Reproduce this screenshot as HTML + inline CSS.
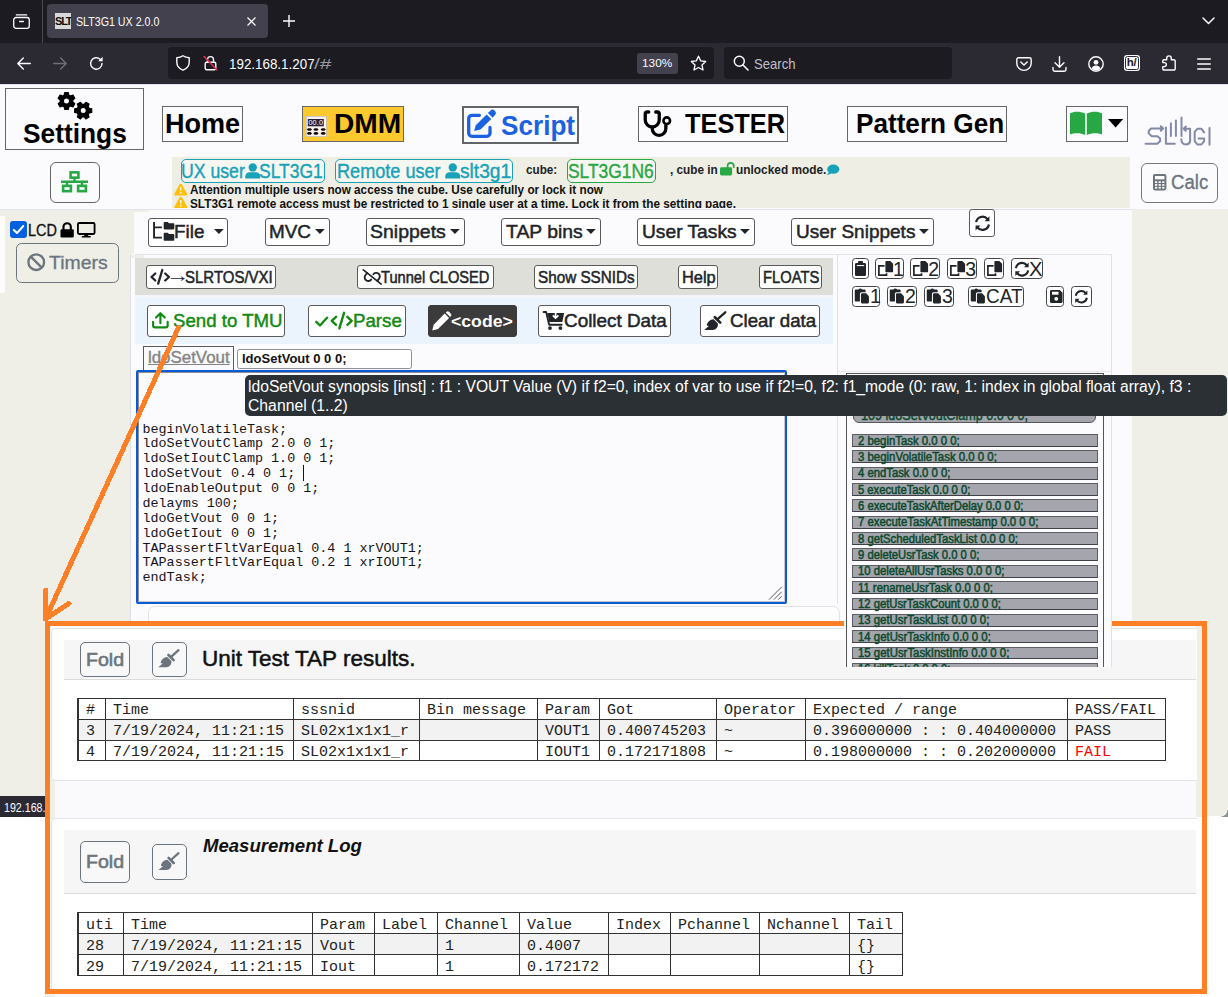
<!DOCTYPE html>
<html lang="en"><head><meta charset="utf-8"><title>SLT3G1 UX 2.0.0</title>
<style>
html,body{margin:0;padding:0;}
body{width:1228px;height:997px;position:relative;overflow:hidden;background:#ffffff;font-family:"Liberation Sans",sans-serif;color:#212529;}
body div{position:absolute;box-sizing:border-box;}
.a{position:absolute;white-space:nowrap;transform-origin:0 50%;}
.s{font-family:"Liberation Sans",sans-serif;}
.m{font-family:"Liberation Mono",monospace;}
.b{display:flex;align-items:center;justify-content:center;white-space:nowrap;background:#fff;border:1px solid #5a5a5a;border-radius:3px;color:#212529;overflow:hidden;}
.b svg{flex:none;display:block;}
svg{position:absolute;overflow:visible;}
.b svg{position:static;}
table{position:absolute;border-collapse:collapse;font-family:"Liberation Mono",monospace;font-size:15px;color:#222;table-layout:fixed;}
td{border:1px solid #333;padding:2px 0 0 7.500px;line-height:15px;vertical-align:top;white-space:nowrap;overflow:hidden;box-sizing:border-box;}
td:first-child{border-left-width:2px;padding-left:7px;}
tr.g td{background:#f2f2f2;}

</style></head>
<body>
<div style="left:0px;top:0px;width:1228px;height:43px;background:#1c1b22;"></div>
<div style="left:0px;top:43px;width:1228px;height:41px;background:#2b2a33;"></div>
<svg style="left:12.500px;top:14px" width="17" height="15" viewBox="0 0 18 16"><path d="M3.5 1h11" stroke="#fbfbfe" stroke-width="1.4" stroke-linecap="round" fill="none"/><rect x="0.7" y="3.7" width="16.6" height="11.6" rx="2.5" fill="none" stroke="#fbfbfe" stroke-width="1.4"/><path d="M7 8h4" stroke="#fbfbfe" stroke-width="1.4" stroke-linecap="round"/></svg>
<div style="left:42px;top:0px;width:1px;height:43px;background:#4a4952;"></div>
<div style="left:47px;top:3.5px;width:221px;height:34.5px;background:#42414d;border-radius:4px;"></div>
<div style="left:55px;top:13px;width:16px;height:16px;background:#d8d8d8;overflow:hidden;"><span class="a s" style="left:0px;top:1px;font-size:11px;line-height:14px;font-weight:bold;color:#111;letter-spacing:-1.2px;">SLT</span></div>
<span id="t1" class="a s" style="left:76.31px;top:15px;font-size:12.5px;line-height:14px;transform:scaleX(0.8529);color:#fbfbfe;">SLT3G1 UX 2.0.0</span>
<svg style="left:247px;top:17px" width="9" height="9" viewBox="0 0 9 9"><path d="M0.5 0.5l8 8M8.5 0.5l-8 8" stroke="#fbfbfe" stroke-width="1.2" fill="none"/></svg>
<svg style="left:283px;top:15px" width="12" height="12" viewBox="0 0 12 12"><path d="M6 0v12M0 6h12" stroke="#fbfbfe" stroke-width="1.4" fill="none"/></svg>
<svg style="left:1202px;top:17px" width="13" height="8" viewBox="0 0 13 8"><path d="M1 1l5.5 5.5L12 1" stroke="#fbfbfe" stroke-width="1.5" fill="none" stroke-linecap="round" stroke-linejoin="round"/></svg>
<svg style="left:17px;top:57px" width="14" height="13" viewBox="0 0 14 13"><path d="M13.3 6.5H1M6.3 1L0.8 6.5l5.5 5.5" stroke="#fbfbfe" stroke-width="1.4" fill="none" stroke-linecap="round" stroke-linejoin="round"/></svg>
<svg style="left:53px;top:57px" width="14" height="13" viewBox="0 0 14 13"><path d="M0.7 6.5H13M7.7 1l5.5 5.5-5.5 5.5" stroke="#6f6e78" stroke-width="1.4" fill="none" stroke-linecap="round" stroke-linejoin="round"/></svg>
<svg style="left:89px;top:56px" width="15" height="15" viewBox="0 0 15 15"><path d="M13 7.5A5.7 5.7 0 1 1 11.3 3.4" stroke="#fbfbfe" stroke-width="1.4" fill="none" stroke-linecap="round"/><path d="M13.6 0.8v4.4H9.2z" fill="#fbfbfe"/></svg>
<div style="left:168px;top:47px;width:546px;height:32px;background:#1c1b22;border-radius:4px;"></div>
<svg style="left:176px;top:55px" width="14" height="16" viewBox="0 0 14 16"><path d="M7 0.8C5 2.2 3 2.6 0.8 2.7v4.5c0 3.6 2.4 6.4 6.2 8 3.8-1.6 6.2-4.4 6.2-8V2.7C11 2.6 9 2.2 7 0.8z" stroke="#fbfbfe" stroke-width="1.4" fill="none" stroke-linejoin="round"/></svg>
<svg style="left:203px;top:55px" width="15" height="16" viewBox="0 0 15 16"><rect x="2.2" y="7.2" width="10.6" height="7.6" rx="1.5" stroke="#fbfbfe" stroke-width="1.4" fill="none"/><path d="M4.5 7V4.6a3 3 0 0 1 6 0V7" stroke="#fbfbfe" stroke-width="1.4" fill="none"/><path d="M1 1.5l13 13.5" stroke="#e22850" stroke-width="1.5" stroke-linecap="round"/></svg>
<span id="t2" class="a s" style="left:229.21px;top:56px;font-size:14.3px;line-height:16px;transform:scaleX(0.9359);color:#fbfbfe;">192.168.1.207</span>
<span id="t3" class="a s" style="left:313.71px;top:56px;font-size:14.3px;line-height:16px;transform:scaleX(1.4721);color:#9b9ba3;">/#</span>
<div style="left:637px;top:53px;width:41px;height:21px;background:#42414d;border-radius:3px;"></div>
<span id="t4" class="a s" style="left:642.37px;top:57px;font-size:11.5px;line-height:12px;transform:scaleX(1.0287);color:#fbfbfe;">130%</span>
<svg style="left:690px;top:55px" width="17" height="16" viewBox="0 0 17 16"><path d="M8.5 1.2l2.2 4.7 5 .6-3.7 3.5 1 5-4.5-2.5L4 15l1-5L1.3 6.5l5-.6z" stroke="#fbfbfe" stroke-width="1.3" fill="none" stroke-linejoin="round"/></svg>
<div style="left:724px;top:47px;width:228px;height:32px;background:#1c1b22;border-radius:4px;"></div>
<svg style="left:733px;top:55px" width="16" height="16" viewBox="0 0 16 16"><circle cx="6.3" cy="6.3" r="5" stroke="#fbfbfe" stroke-width="1.5" fill="none"/><path d="M10 10l5 5" stroke="#fbfbfe" stroke-width="1.6" stroke-linecap="round"/></svg>
<span id="t5" class="a s" style="left:754.21px;top:56px;font-size:14.3px;line-height:16px;transform:scaleX(0.9175);color:#bfbfc9;">Search</span>
<svg style="left:1016px;top:57px" width="16" height="14" viewBox="0 0 16 14"><path d="M2.5 0.8h11a1.7 1.7 0 0 1 1.7 1.7v3.7a7.2 7.2 0 0 1-14.4 0V2.5A1.7 1.7 0 0 1 2.5.8z" stroke="#fbfbfe" stroke-width="1.4" fill="none"/><path d="M4.8 5l3.2 3 3.2-3" stroke="#fbfbfe" stroke-width="1.5" fill="none" stroke-linecap="round" stroke-linejoin="round"/></svg>
<svg style="left:1052px;top:55.500px" width="15" height="16" viewBox="0 0 15 16"><path d="M7.5 0.8v10M3 6.8l4.5 4.5L12 6.8M1 11.5v2a1.7 1.7 0 0 0 1.7 1.7h9.6a1.7 1.7 0 0 0 1.7-1.7v-2" stroke="#fbfbfe" stroke-width="1.4" fill="none" stroke-linecap="round" stroke-linejoin="round"/></svg>
<svg style="left:1088px;top:55.700px" width="16" height="16" viewBox="0 0 16 16"><circle cx="8" cy="8" r="7.2" stroke="#fbfbfe" stroke-width="1.4" fill="none"/><circle cx="8" cy="6.3" r="2.4" fill="#fbfbfe"/><path d="M3.4 12.6a5 5 0 0 1 9.2 0 6.5 6.5 0 0 1-9.2 0z" fill="#fbfbfe"/></svg>
<div style="left:1124px;top:55.2px;width:15.6px;height:15.6px;background:#fbfbfe;border-radius:3px;overflow:hidden;"><div style="left:1px;top:1px;width:13.600px;height:13.600px;border:1px solid #2b2a33;border-radius:2.500px;"></div><span class="a s" style="left:2.800px;top:1px;font-size:11.500px;line-height:13px;font-weight:bold;color:#1c1b22;letter-spacing:-0.300px;">h/</span></div>
<svg style="left:1161.500px;top:55.200px" width="14" height="16" viewBox="0 0 14 16"><path d="M4.700 4.800V3.200a2.300 2.300 0 0 1 4.600 0V4.800H12a1.200 1.200 0 0 1 1.200 1.200V13.800a1.200 1.200 0 0 1-1.200 1.200H2a1.200 1.200 0 0 1-1.200-1.200V11.600H2.300a2 2 0 0 0 0-4H0.800V6A1.200 1.200 0 0 1 2 4.800z" stroke="#fbfbfe" stroke-width="1.400" fill="none" stroke-linejoin="round"/></svg>
<svg style="left:1197px;top:57.500px" width="14" height="12" viewBox="0 0 14 12"><path d="M0.7 1h12.600M0.7 6h12.600M0.7 11h12.600" stroke="#fbfbfe" stroke-width="1.4" stroke-linecap="round"/></svg>
<div style="left:0px;top:84px;width:1228px;height:732px;background:#fbfbfe;"></div>
<div style="left:0px;top:84px;width:1228px;height:1px;background:#dfe3ee;"></div>
<div style="left:5px;top:88px;width:139px;height:62px;border:1px solid #666;"></div>
<span id="t6" class="a s" style="left:22.83px;top:117px;font-size:28.5px;line-height:32px;transform:scaleX(0.9235);font-weight:bold;color:#000;">Settings</span>
<div class="b" style="left:162px;top:106px;width:81px;height:36px;font-size:27px;font-weight:bold;color:#000;border-color:#666;border-radius:0;background:transparent;"></div>
<span id="t7" class="a s" style="left:165.33px;top:107px;font-size:28.5px;line-height:32px;transform:scaleX(0.9488);font-weight:bold;color:#000;">Home</span>
<div class="b" style="left:302px;top:106px;width:102px;height:36px;font-size:27px;font-weight:bold;color:#000;border-color:#666;border-radius:0;background:transparent;background:#fdc92e;border-width:1.500px;"></div>
<span id="t8" class="a s" style="left:333.63px;top:107px;font-size:28.5px;line-height:32px;transform:scaleX(0.9861);font-weight:bold;color:#000;">DMM</span>
<div class="b" style="left:462px;top:106.1px;width:117px;height:37.7px;font-size:28px;border:2px solid #636669;border-radius:0;background:transparent;"></div>
<span id="t9" class="a s" style="left:500.96px;top:110px;font-size:28px;line-height:31px;transform:scaleX(0.9335);font-weight:bold;color:#1b62e0;">Script</span>
<div class="b" style="left:638px;top:106px;width:150px;height:36px;font-size:27px;font-weight:bold;color:#000;border-color:#666;border-radius:0;background:transparent;"></div>
<span id="t10" class="a s" style="left:685.23px;top:107px;font-size:28.5px;line-height:32px;transform:scaleX(0.8906);font-weight:bold;color:#000;">TESTER</span>
<div class="b" style="left:847px;top:106px;width:160px;height:36px;font-size:27px;font-weight:bold;color:#000;border-color:#666;border-radius:0;background:transparent;"></div>
<span id="t11" class="a s" style="left:855.93px;top:107px;font-size:28.5px;line-height:32px;transform:scaleX(0.9170);font-weight:bold;color:#000;">Pattern Gen</span>
<div class="b" style="left:1066px;top:106px;width:62px;height:36px;font-size:27px;font-weight:bold;color:#000;border-color:#666;border-radius:0;background:transparent;"></div>
<svg style="left:1138px;top:108px" width="80" height="44" viewBox="0 0 80 44"><g fill="none" stroke="#848aa6" stroke-width="2" stroke-linecap="round" stroke-linejoin="round"><path d="M22.800 18.200L25.100 20.500L22.800 22.800M25.100 20.500H13L10.700 23.100V25.400L13.700 28.300H19.500L22.100 30.600V33.200L19.200 35.800H7.500"/><path d="M27.900 19.500V35.800H36.800"/><path d="M32.900 15.300V28M37.900 12.400V28M43.500 9.400V28"/><path d="M47.800 18.500L45.600 20.700L47.800 22.900M45.600 20.700H52.100V33.200Q51.500 36.500 47.900 36.500Q43.500 36.500 43.300 31.300"/><path d="M66.100 24.400L63.500 20.800H59.300L56.700 23.800V33.200L59.300 36.500H63.500L66.100 33.200V30.600H60.600"/><path d="M71.500 19.900V36.800"/></g></svg>
<div style="left:172px;top:157px;width:958px;height:50.5px;background:#eeeee5;overflow:hidden;"></div>
<div style="left:180.5px;top:159.2px;width:144px;height:24px;border:1px solid #17a2b8;border-radius:5px;background:#f7f7f2;"></div>
<span id="t12" class="a s" style="left:180.9px;top:160px;font-size:20px;line-height:22px;transform:scaleX(0.8830);color:#17a2b8;-webkit-text-stroke:0.4px #17a2b8;">UX user</span>
<svg style="left:244.5px;top:163.3px" width="15.5" height="15.5" viewBox="0 0 16 16"><circle cx="8" cy="4.6" r="4.3" fill="#17a2b8"/><path d="M0.300 16v-2.200c0-2.600 2.100-4.200 4.600-4.200h6.200c2.500 0 4.600 1.600 4.600 4.200V16z" fill="#17a2b8"/></svg>
<span id="t13" class="a s" style="left:259.4px;top:160px;font-size:20px;line-height:22px;transform:scaleX(0.8726);color:#17a2b8;-webkit-text-stroke:0.4px #17a2b8;">SLT3G1</span>
<div style="left:335px;top:159.2px;width:178px;height:24px;border:1px solid #17a2b8;border-radius:5px;background:#f7f7f2;"></div>
<span id="t14" class="a s" style="left:336.5px;top:160px;font-size:20px;line-height:22px;transform:scaleX(0.9048);color:#17a2b8;-webkit-text-stroke:0.4px #17a2b8;">Remote user</span>
<svg style="left:444.7px;top:163.3px" width="15.5" height="15.5" viewBox="0 0 16 16"><circle cx="8" cy="4.6" r="4.3" fill="#17a2b8"/><path d="M0.300 16v-2.200c0-2.600 2.100-4.200 4.600-4.200h6.200c2.500 0 4.600 1.600 4.600 4.200V16z" fill="#17a2b8"/></svg>
<span id="t15" class="a s" style="left:459.9px;top:160px;font-size:20px;line-height:22px;transform:scaleX(0.9593);color:#17a2b8;-webkit-text-stroke:0.4px #17a2b8;">slt3g1</span>
<span id="t16" class="a s" style="left:525.78px;top:162px;font-size:13px;line-height:15px;transform:scaleX(0.9007);color:#222;font-weight:bold;">cube:</span>
<div style="left:567.3px;top:159.2px;width:88.4px;height:24px;border:1px solid #28a745;border-radius:5px;background:#f7f7f2;"></div>
<span id="t17" class="a s" style="left:568.4px;top:160px;font-size:20px;line-height:22px;transform:scaleX(0.8694);color:#28a745;-webkit-text-stroke:0.4px #28a745;">SLT3G1N6</span>
<span id="t18" class="a s" style="left:669.68px;top:162px;font-size:13px;line-height:15px;transform:scaleX(0.9070);color:#222;font-weight:bold;">, cube in</span>
<svg style="left:719.9px;top:162.2px" width="15" height="13.4" viewBox="0 0 15 13.400"><rect x="0" y="5.200" width="12.100" height="8.200" rx="1.400" fill="#28a745"/><path d="M7.600 5.600V3.900a3.100 3.100 0 0 1 6.200 0V5.200" stroke="#28a745" stroke-width="1.700" fill="none" stroke-linecap="round"/></svg>
<span id="t19" class="a s" style="left:736.28px;top:162px;font-size:13px;line-height:15px;transform:scaleX(0.9137);color:#222;font-weight:bold;">unlocked mode.</span>
<svg style="left:826.4px;top:163.5px" width="13.6" height="11.3" viewBox="0 0 14 10.500"><ellipse cx="7.500" cy="4.800" rx="6.300" ry="4.800" fill="#17a2b8"/><path d="M3 7.500c-.3 1.500-1.300 2.400-2.600 3 1.900.2 3.700-.4 5-1.500z" fill="#17a2b8"/></svg>
<svg style="left:174px;top:182.8px" width="13.5" height="12.5" viewBox="0 0 14 13"><path d="M7 0.700c.5 0 .9.250 1.150.700l5.500 9.700c.5.900-.150 1.900-1.150 1.900h-11c-1 0-1.650-1-1.150-1.900l5.500-9.700C6.100.950 6.500.700 7 .700z" fill="#ffc107"/><path d="M6.300 4.200h1.400l-.25 4.300h-.9z" fill="#fff"/><circle cx="7" cy="10.300" r=".85" fill="#fff"/></svg>
<span id="t20" class="a s" style="left:189.78px;top:182px;font-size:13px;line-height:15px;transform:scaleX(0.9016);color:#111;font-weight:bold;">Attention multiple users now access the cube. Use carefully or lock it now</span>
<div style="left:172px;top:196px;width:958px;height:11.5px;overflow:hidden;"><svg style="left:2px;top:-0.3px" width="13.5" height="12.5" viewBox="0 0 14 13"><path d="M7 0.700c.5 0 .9.250 1.150.700l5.500 9.700c.5.900-.150 1.900-1.150 1.900h-11c-1 0-1.650-1-1.150-1.900l5.500-9.700C6.100.950 6.500.700 7 .700z" fill="#ffc107"/><path d="M6.300 4.200h1.400l-.25 4.300h-.9z" fill="#fff"/><circle cx="7" cy="10.300" r=".85" fill="#fff"/></svg><span id="t21" class="a s" style="left:17.79px;top:0px;font-size:13px;line-height:15px;transform:scaleX(0.9064);color:#111;font-weight:bold;">SLT3G1 remote access must be restricted to 1 single user at a time. Lock it from the setting page.</span></div>
<div class="b" style="left:50px;top:162px;width:50px;height:41px;font-size:20px;border-radius:6px;border-color:#666;background:#fbfbfd;"></div>
<div class="b" style="left:1141px;top:163px;width:77px;height:40px;font-size:20px;border-radius:6px;border-color:#777;background:#fbfbfd;"></div>
<span id="t22" class="a s" style="left:1170.5px;top:171px;font-size:20px;line-height:22px;transform:scaleX(0.9296);color:#6c757d;-webkit-text-stroke:0.35px #6c757d;">Calc</span>
<div style="left:0px;top:209px;width:1131.6px;height:1px;background:#dfe4ec;"></div>
<div style="left:0px;top:210px;width:134px;height:606px;background:#efeee7;"></div>
<div style="left:134px;top:210px;width:15px;height:1.6px;background:#efeee7;"></div>
<div style="left:130px;top:254px;width:1px;height:562px;background:#dcdfe5;"></div>
<div style="left:131px;top:254px;width:5px;height:562px;background:#fbfbfd;"></div>
<div style="left:1131.6px;top:209px;width:97px;height:607px;background:#efeee7;"></div>
<div style="left:0px;top:216px;width:5px;height:77px;background:#fdfdfd;"></div>
<div style="left:10px;top:221px;width:17px;height:17px;background:#0060df;border-radius:3px;"></div>
<svg style="left:10px;top:221px" width="17" height="17" viewBox="0 0 16 16"><path d="M3.600 8.400l3 3 5.800-6.600" stroke="#fff" stroke-width="2" fill="none" stroke-linecap="round" stroke-linejoin="round"/></svg>
<span id="t23" class="a s" style="left:27.67px;top:221px;font-size:17px;line-height:19px;transform:scaleX(0.8487);color:#111;-webkit-text-stroke:0.3px #111;">LCD</span>
<div class="b" style="left:15.9px;top:243px;width:103.2px;height:40px;font-size:20px;border-radius:5.500px;border-color:#6c757d;background:transparent;"></div>
<span id="t24" class="a s" style="left:49.28px;top:252px;font-size:18.5px;line-height:21px;transform:scaleX(1.0500);color:#6c757d;-webkit-text-stroke:0.3px #6c757d;">Timers</span>
<div class="b" style="left:148.1px;top:218.1px;width:79.9px;height:28.7px;font-size:20px;"></div>
<span id="t25" class="a s" style="left:174.46px;top:221px;font-size:19px;line-height:21px;transform:scaleX(0.9923);color:#212529;-webkit-text-stroke:0.5px #212529;">File</span>
<svg style="left:214.1px;top:228.8px" width="9.800" height="4.900" viewBox="0 0 10 5"><path d="M0 0h10L5 5z" fill="#212529"/></svg>
<div class="b" style="left:265.4px;top:218.1px;width:64.3px;height:27.7px;font-size:20px;"></div>
<span id="t26" class="a s" style="left:269.25px;top:221px;font-size:19px;line-height:21px;transform:scaleX(0.9942);color:#212529;-webkit-text-stroke:0.5px #212529;">MVC</span>
<svg style="left:315.1px;top:228.8px" width="9.800" height="4.900" viewBox="0 0 10 5"><path d="M0 0h10L5 5z" fill="#212529"/></svg>
<div class="b" style="left:366.1px;top:218.1px;width:98.8px;height:27.7px;font-size:20px;"></div>
<span id="t27" class="a s" style="left:370.25px;top:221px;font-size:19px;line-height:21px;transform:scaleX(1.0248);color:#212529;-webkit-text-stroke:0.5px #212529;">Snippets</span>
<svg style="left:449.9px;top:228.8px" width="9.800" height="4.900" viewBox="0 0 10 5"><path d="M0 0h10L5 5z" fill="#212529"/></svg>
<div class="b" style="left:501.1px;top:218.1px;width:100px;height:27.7px;font-size:20px;"></div>
<span id="t28" class="a s" style="left:505.56px;top:221px;font-size:19px;line-height:21px;transform:scaleX(1.0179);color:#212529;-webkit-text-stroke:0.5px #212529;">TAP bins</span>
<svg style="left:586.2px;top:228.8px" width="9.800" height="4.900" viewBox="0 0 10 5"><path d="M0 0h10L5 5z" fill="#212529"/></svg>
<div class="b" style="left:637.2px;top:218.1px;width:117.7px;height:27.7px;font-size:20px;"></div>
<span id="t29" class="a s" style="left:641.96px;top:221px;font-size:19px;line-height:21px;transform:scaleX(1.0103);color:#212529;-webkit-text-stroke:0.5px #212529;">User Tasks</span>
<svg style="left:740.4px;top:228.8px" width="9.800" height="4.900" viewBox="0 0 10 5"><path d="M0 0h10L5 5z" fill="#212529"/></svg>
<div class="b" style="left:791.1px;top:218.1px;width:142.6px;height:27.7px;font-size:20px;"></div>
<span id="t30" class="a s" style="left:795.66px;top:221px;font-size:19px;line-height:21px;transform:scaleX(1.0004);color:#212529;-webkit-text-stroke:0.5px #212529;">User Snippets</span>
<svg style="left:918.7px;top:228.8px" width="9.800" height="4.900" viewBox="0 0 10 5"><path d="M0 0h10L5 5z" fill="#212529"/></svg>
<div class="b" style="left:969px;top:209px;width:26px;height:28px;font-size:20px;"></div>
<div style="left:135px;top:254px;width:977px;height:1px;background:#e4e4ea;"></div>
<div style="left:837.4px;top:254px;width:1px;height:350px;background:#e0e0e6;"></div>
<div style="left:1111px;top:254px;width:1px;height:562px;background:#e0e0e6;"></div>
<div style="left:837.4px;top:371px;width:275px;height:1px;background:#e6e6ec;"></div>
<div style="left:131px;top:254.5px;width:13px;height:3.2px;background:#eef0ee;"></div>
<div style="left:135px;top:258.2px;width:698px;height:36.4px;background:#dfdfda;"></div>
<div style="left:135px;top:294.6px;width:698px;height:3px;background:#f2f5fa;"></div>
<div class="b" style="left:146.2px;top:265.3px;width:130.3px;height:23.3px;font-size:16px;"></div>
<span id="t31" class="a s" style="left:184.73px;top:269px;font-size:15.8px;line-height:17px;transform:scaleX(0.9487);color:#212529;-webkit-text-stroke:0.5px #212529;">SLRTOS/VXI</span>
<div class="b" style="left:357.1px;top:265.3px;width:136.5px;height:23.3px;font-size:16px;"></div>
<span id="t32" class="a s" style="left:381.43px;top:269px;font-size:15.8px;line-height:17px;transform:scaleX(0.9262);color:#212529;-webkit-text-stroke:0.5px #212529;">Tunnel CLOSED</span>
<div class="b" style="left:534.3px;top:265.3px;width:103.4px;height:23.3px;font-size:16px;"></div>
<span id="t33" class="a s" style="left:537.53px;top:269px;font-size:15.8px;line-height:17px;transform:scaleX(0.9655);color:#212529;-webkit-text-stroke:0.5px #212529;">Show SSNIDs</span>
<div class="b" style="left:678.4px;top:265.3px;width:39.5px;height:23.3px;font-size:16px;"></div>
<span id="t34" class="a s" style="left:681.53px;top:269px;font-size:15.8px;line-height:17px;transform:scaleX(1.0381);color:#212529;-webkit-text-stroke:0.5px #212529;">Help</span>
<div class="b" style="left:759.2px;top:265.3px;width:62.5px;height:23.3px;font-size:16px;"></div>
<span id="t35" class="a s" style="left:762.73px;top:269px;font-size:15.8px;line-height:17px;transform:scaleX(0.9329);color:#212529;-webkit-text-stroke:0.5px #212529;">FLOATS</span>
<span id="t36" class="a s" style="left:166.26px;top:265px;font-size:19px;line-height:21px;transform:scaleX(1.2416);color:#212529;">→</span>
<div style="left:135px;top:297.5px;width:698.1px;height:46.5px;background:#ebf3fc;"></div>
<div class="b" style="left:147.3px;top:305.2px;width:138.1px;height:31.4px;font-size:20px;"></div>
<span id="t37" class="a s" style="left:172.88px;top:310px;font-size:18.5px;line-height:21px;transform:scaleX(1.0081);color:#128a12;-webkit-text-stroke:0.45px #128a12;">Send to TMU</span>
<div class="b" style="left:308.1px;top:305.2px;width:97.7px;height:31.4px;font-size:20px;"></div>
<span id="t38" class="a s" style="left:353.28px;top:310px;font-size:18.5px;line-height:21px;transform:scaleX(1.0105);color:#128a12;-webkit-text-stroke:0.45px #128a12;">Parse</span>
<div class="b" style="left:428.1px;top:305.2px;width:88.8px;height:31.4px;font-size:20px;background:#3b3b3b;border-color:#3b3b3b;"></div>
<span id="t39" class="a s" style="left:450.76px;top:312px;font-size:17px;line-height:19px;transform:scaleX(1.0373);color:#fff;font-weight:bold;">&lt;code&gt;</span>
<div class="b" style="left:538px;top:305.2px;width:132.5px;height:31.4px;font-size:20px;"></div>
<span id="t40" class="a s" style="left:564.08px;top:310px;font-size:18.5px;line-height:21px;transform:scaleX(1.0205);color:#212529;-webkit-text-stroke:0.5px #212529;">Collect Data</span>
<div class="b" style="left:700.1px;top:305.2px;width:120.4px;height:31.4px;font-size:20px;"></div>
<span id="t41" class="a s" style="left:730.48px;top:310px;font-size:18.5px;line-height:21px;transform:scaleX(1.0091);color:#212529;-webkit-text-stroke:0.5px #212529;">Clear data</span>
<div style="left:143px;top:345.5px;width:91px;height:27px;border:1.500px solid #5a5a5a;border-bottom:none;background:#fbfbfd;"></div>
<span id="t42" class="a s" style="left:148.11px;top:348px;font-size:16.2px;line-height:18px;transform:scaleX(1.0417);color:#858585;text-decoration:underline;-webkit-text-stroke:0.4px #858585;">ldoSetVout</span>
<div style="left:237.2px;top:348.5px;width:175.2px;height:20.9px;border:1px solid #8f8f9d;border-radius:2.500px;background:#fff;"></div>
<span id="t43" class="a s" style="left:241.56px;top:351px;font-size:13.5px;line-height:15px;transform:scaleX(0.9629);color:#111;font-weight:bold;">ldoSetVout 0 0 0;</span>
<div style="left:136px;top:370.4px;width:651px;height:233.8px;border:2px solid #0a5ad8;border-radius:2px;background:#fbfbfe;"></div>
<div style="left:138px;top:372.4px;width:647px;height:229.8px;border:1.500px solid #8f8f8f;border-right-color:#c8c8cc;border-bottom-color:#c8c8cc;"></div>
<span id="t44" class="a m" style="left:142.5px;top:422px;font-size:13.4px;line-height:15px;color:#15141a;">beginVolatileTask;</span>
<span id="t45" class="a m" style="left:142.5px;top:436px;font-size:13.4px;line-height:15px;color:#15141a;">ldoSetVoutClamp 2.0 0 1;</span>
<span id="t46" class="a m" style="left:142.5px;top:451px;font-size:13.4px;line-height:15px;color:#15141a;">ldoSetIoutClamp 1.0 0 1;</span>
<span id="t47" class="a m" style="left:142.5px;top:466px;font-size:13.4px;line-height:15px;color:#15141a;">ldoSetVout 0.4 0 1;</span>
<span id="t48" class="a m" style="left:142.5px;top:481px;font-size:13.4px;line-height:15px;color:#15141a;">ldoEnableOutput 0 0 1;</span>
<span id="t49" class="a m" style="left:142.5px;top:496px;font-size:13.4px;line-height:15px;color:#15141a;">delayms 100;</span>
<span id="t50" class="a m" style="left:142.5px;top:511px;font-size:13.4px;line-height:15px;color:#15141a;">ldoGetVout 0 0 1;</span>
<span id="t51" class="a m" style="left:142.5px;top:526px;font-size:13.4px;line-height:15px;color:#15141a;">ldoGetIout 0 0 1;</span>
<span id="t52" class="a m" style="left:142.5px;top:541px;font-size:13.4px;line-height:15px;color:#15141a;">TAPassertFltVarEqual 0.4 1 xrVOUT1;</span>
<span id="t53" class="a m" style="left:142.5px;top:555px;font-size:13.4px;line-height:15px;color:#15141a;">TAPassertFltVarEqual 0.2 1 xrIOUT1;</span>
<span id="t54" class="a m" style="left:142.5px;top:570px;font-size:13.4px;line-height:15px;color:#15141a;">endTask;</span>
<div style="left:303px;top:465px;width:1px;height:16px;background:#15141a;"></div>
<svg style="left:767.600px;top:585.500px" width="14.600" height="14.600" viewBox="0 0 15 15"><path d="M1 14L14 1M6 14l8-8M10.500 14l3.500-3.500" stroke="#555" stroke-width="1" fill="none"/></svg>
<div style="left:148px;top:606px;width:692px;height:30px;border:1px solid #e2e2e6;border-radius:7px;background:#fdfdfe;"></div>
<div class="b" style="left:852px;top:257.9px;width:17px;height:21.5px;font-size:18px;border-radius:3.500px;border-color:#444;"></div>
<div class="b" style="left:875.3px;top:257.9px;width:28.5px;height:21.5px;font-size:18px;border-radius:3.500px;border-color:#444;"></div>
<div class="b" style="left:910px;top:257.9px;width:30px;height:21.5px;font-size:18px;border-radius:3.500px;border-color:#444;"></div>
<div class="b" style="left:947px;top:257.9px;width:29.5px;height:21.5px;font-size:18px;border-radius:3.500px;border-color:#444;"></div>
<div class="b" style="left:984.3px;top:257.9px;width:20px;height:21.5px;font-size:18px;border-radius:3.500px;border-color:#444;"></div>
<div class="b" style="left:1011.3px;top:257.9px;width:32px;height:21.5px;font-size:18px;border-radius:3.500px;border-color:#444;"></div>
<div class="b" style="left:852px;top:286.2px;width:28px;height:20.6px;font-size:18px;border-radius:3.500px;border-color:#444;"></div>
<div class="b" style="left:887px;top:286.2px;width:29.6px;height:20.6px;font-size:18px;border-radius:3.500px;border-color:#444;"></div>
<div class="b" style="left:924px;top:286.2px;width:30px;height:20.6px;font-size:18px;border-radius:3.500px;border-color:#444;"></div>
<div class="b" style="left:968.2px;top:286.2px;width:55.5px;height:20.6px;font-size:18px;border-radius:3.500px;border-color:#444;"></div>
<div class="b" style="left:1046.2px;top:286.2px;width:18.3px;height:20.6px;font-size:18px;border-radius:3.500px;border-color:#444;"></div>
<div class="b" style="left:1071px;top:286.2px;width:20.6px;height:20.6px;font-size:18px;border-radius:3.500px;border-color:#444;"></div>
<svg style="left:0px;top:0px" width="150" height="150" viewBox="0 0 150 150"><path d="M68.78 106.98 L68.32 109.51 L64.68 109.51 L64.22 106.98 L62.46 105.96 L60.04 106.83 L58.22 103.67 L60.18 102.02 L60.18 99.98 L58.22 98.33 L60.04 95.17 L62.46 96.04 L64.22 95.02 L64.68 92.49 L68.32 92.49 L68.78 95.02 L70.54 96.04 L72.96 95.17 L74.78 98.33 L72.82 99.98 L72.82 102.02 L74.78 103.67 L72.96 106.83 L70.54 105.96Z M69.60 101.00A3.1 3.1 0 1 0 63.40 101.00A3.1 3.1 0 1 0 69.60 101.00Z M89.18 108.32 L91.71 108.78 L91.71 112.42 L89.18 112.88 L88.16 114.64 L89.03 117.06 L85.87 118.88 L84.22 116.92 L82.18 116.92 L80.53 118.88 L77.37 117.06 L78.24 114.64 L77.22 112.88 L74.69 112.42 L74.69 108.78 L77.22 108.32 L78.24 106.56 L77.37 104.14 L80.53 102.32 L82.18 104.28 L84.22 104.28 L85.87 102.32 L89.03 104.14 L88.16 106.56Z M86.30 110.60A3.1 3.1 0 1 0 80.10 110.60A3.1 3.1 0 1 0 86.30 110.60Z" fill="#000" fill-rule="evenodd" stroke="#000" stroke-width="1.200" stroke-linejoin="round"/></svg>
<svg style="left:61px;top:170.5px" width="27" height="21.5" viewBox="0 0 27 21"><g fill="none" stroke="#28a745" stroke-width="2.600"><rect x="9.6" y="1.1" width="7.8" height="5.3"/><rect x="2.1" y="14.6" width="7.8" height="5.3"/><rect x="17.1" y="14.6" width="7.8" height="5.3"/></g><path d="M0 10.500h27M13.500 6.500v4M6 10.500v4M21 10.500v4" stroke="#28a745" stroke-width="2.400" fill="none"/></svg>
<svg style="left:306.2px;top:116.1px" width="20.6" height="20.7" viewBox="0 0 20.600 20.700"><rect x="0.300" y="0.300" width="20" height="20.100" fill="#fcf1ef" stroke="#b4b8dc" stroke-width=".6"/><rect x="1.800" y="3" width="16" height="7.300" fill="#23233c"/><text x="9.800" y="9.300" font-family="Liberation Sans,sans-serif" font-size="7.200" text-anchor="middle" fill="#fff" letter-spacing="0.200">00.0</text><path d="M0.7999999999999998 13.5l1.300-1.300h2.600l1.300 1.300l-1.300 1.300h-2.600z" fill="#1a0f0f"/><path d="M7.300000000000001 13.5l1.300-1.300h2.600l1.300 1.300l-1.300 1.300h-2.600z" fill="#1a0f0f"/><path d="M14.6 13.5l1.300-1.300h2.600l1.300 1.300l-1.300 1.300h-2.600z" fill="#1a0f0f"/><path d="M0.7999999999999998 17.4l1.300-1.300h2.600l1.300 1.300l-1.300 1.300h-2.600z" fill="#1a0f0f"/><path d="M7.300000000000001 17.4l1.300-1.300h2.600l1.300 1.300l-1.300 1.300h-2.600z" fill="#1a0f0f"/><path d="M14.6 17.4l1.300-1.300h2.600l1.300 1.300l-1.300 1.300h-2.600z" fill="#1a0f0f"/></svg>
<svg style="left:467.3px;top:110.4px" width="28.5" height="28" viewBox="0 0 28.500 28"><path d="M12.400 5.300H5A3.300 3.300 0 0 0 1.700 8.600V23A3.300 3.300 0 0 0 5 26.300H19.700A3.300 3.300 0 0 0 23 23V17.500" stroke="#1b62e0" stroke-width="3.300" fill="none" stroke-linecap="round"/><path d="M7.100 20.900L8.800 15.200L19.600 4.400L24.300 9.100L13.500 19.600z" fill="#1b62e0"/><path d="M20.900 3.100L23.300 0.700a3.100 3.100 0 0 1 4.500 4.500L25.600 7.700z" fill="#1b62e0"/></svg>
<svg style="left:642.8px;top:109.6px" width="29.5" height="27" viewBox="0 0 29 27"><path d="M5.500 2H3.800A1.800 1.800 0 0 0 2 3.800V10a7 7 0 0 0 14 0V3.800A1.800 1.800 0 0 0 14.200 2H12.500" stroke="#000" stroke-width="3.300" fill="none" stroke-linecap="round"/><path d="M9 17v1.500a6.800 6.800 0 0 0 13.600 0V14.500" stroke="#000" stroke-width="3.300" fill="none"/><circle cx="23.500" cy="10.700" r="3.300" fill="none" stroke="#000" stroke-width="2.600"/></svg>
<svg style="left:1070px;top:111.4px" width="32" height="24" viewBox="0 0 32 24"><path d="M0 2.200C4 .2 10 0 15.200 2.600V24C10 21.600 4 22 0 23.600z" fill="#28a745"/><path d="M32 2.200C28 .2 22 0 16.800 2.600V24C22 21.600 28 22 32 23.600z" fill="#28a745"/></svg>
<svg style="left:1108.3px;top:119px" width="15.200" height="8.500" viewBox="0 0 15.200 8.500"><path d="M0 0h15.200L7.600 8.500z" fill="#000"/></svg>
<svg style="left:1152.8px;top:174px" width="13.4" height="16.4" viewBox="0 0 13.400 16.400"><path d="M1.800 0h9.800A1.800 1.800 0 0 1 13.400 1.800v12.800a1.800 1.800 0 0 1-1.800 1.800H1.800A1.800 1.800 0 0 1 0 14.600V1.800A1.800 1.800 0 0 1 1.800 0z" fill="#6c757d"/><rect x="2" y="2" width="9.400" height="3.300" fill="#fff"/><rect x="2" y="7.3" width="2.200" height="1.700" fill="#fff"/><rect x="5.6" y="7.3" width="2.200" height="1.700" fill="#fff"/><rect x="9.2" y="7.3" width="2.200" height="1.700" fill="#fff"/><rect x="2" y="10.1" width="2.200" height="1.700" fill="#fff"/><rect x="5.6" y="10.1" width="2.200" height="1.700" fill="#fff"/><rect x="9.2" y="10.1" width="2.200" height="1.700" fill="#fff"/><rect x="2" y="12.9" width="2.200" height="1.700" fill="#fff"/><rect x="5.6" y="12.9" width="2.200" height="1.700" fill="#fff"/><rect x="9.2" y="12.9" width="2.200" height="1.700" fill="#fff"/></svg>
<svg style="left:59.8px;top:222.2px" width="14.3" height="15.8" viewBox="0 0 14 15"><rect x="0.500" y="6.800" width="13" height="8.200" rx="1.400" fill="#000"/><path d="M3.400 7.500V4.600a3.600 3.600 0 0 1 7.200 0v2.900" stroke="#000" stroke-width="2.100" fill="none"/></svg>
<svg style="left:77.3px;top:222.2px" width="18.5" height="15.5" viewBox="0 0 18 15"><rect x="0.900" y="0.900" width="16.200" height="10.700" rx="1.200" fill="none" stroke="#000" stroke-width="1.800"/><path d="M7.500 11.500h3l.6 2.300h-4.200z" fill="#000"/><rect x="4.500" y="13.500" width="9" height="1.500" rx=".7" fill="#000"/></svg>
<svg style="left:26.5px;top:252.9px" width="18.5" height="18.3" viewBox="0 0 18 18"><circle cx="9" cy="9" r="7.700" fill="none" stroke="#6c757d" stroke-width="2.300"/><path d="M3.600 3.600l10.800 10.800" stroke="#6c757d" stroke-width="2.300"/></svg>
<svg style="left:152.8px;top:222.4px" width="21.4" height="18.7" viewBox="0 0 21.200 18.700"><path d="M0.950 0V15.600H8.800M0.950 5.400H8.800" stroke="#212529" stroke-width="1.900" fill="none"/><path d="M11.400 0h3.300l1.200 1.200h4.500a.8.8 0 0 1 .8.800v4.600a.8.8 0 0 1-.8.800h-9a.8.8 0 0 1-.8-.8V.8a.8.8 0 0 1 .8-.8z" fill="#212529"/><path d="M11.400 10.700h3.300l1.200 1.200h4.500a.8.8 0 0 1 .8.800v5.200a.8.8 0 0 1-.8.800h-9a.8.8 0 0 1-.8-.8v-6.400a.8.8 0 0 1 .8-.8z" fill="#212529"/></svg>
<svg style="left:973.5px;top:215.5px" width="17" height="14.7" viewBox="0 0 17 15"><path d="M2 6.300A6.600 6.600 0 0 1 13.600 3.200" stroke="#212529" stroke-width="2.3" fill="none"/><path d="M15.600 0.300v5h-5z" fill="#212529"/><path d="M15 8.700A6.600 6.600 0 0 1 3.400 11.800" stroke="#212529" stroke-width="2.3" fill="none"/><path d="M1.400 14.700v-5h5z" fill="#212529"/></svg>
<svg style="left:149.5px;top:268.9px" width="20.5" height="15.7" viewBox="0 0 20.500 15.700"><path d="M5.300 4.500L1.500 8L5.300 11.500M15.200 4.500L19 8L15.200 11.500M12.300 1L8.200 14.700" stroke="#212529" stroke-width="2.3" fill="none" stroke-linecap="round" stroke-linejoin="round"/></svg>
<svg style="left:361.5px;top:269px" width="20.5" height="15.9" viewBox="0 0 20 16"><path d="M8.500 10.500a3.600 3.600 0 0 1-5.100 0 3.600 3.600 0 0 1 0-5.100l2-2M11.500 5.500a3.600 3.600 0 0 1 5.100 0 3.600 3.600 0 0 1 0 5.100l-2 2" stroke="#212529" stroke-width="1.900" fill="none" stroke-linecap="round" transform="rotate(-8 10 8)"/><path d="M1 0.800l18 14.400" stroke="#212529" stroke-width="1.700" stroke-linecap="round"/></svg>
<svg style="left:152.2px;top:311.3px" width="16.8" height="18.4" viewBox="0 0 18 17.700"><path d="M9 12V1.500M4.300 6L9 1.300 13.700 6" stroke="#128a12" stroke-width="2.300" fill="none" stroke-linecap="round" stroke-linejoin="round"/><path d="M1.200 10.500v4a2 2 0 0 0 2 2h11.600a2 2 0 0 0 2-2v-4" stroke="#128a12" stroke-width="2.300" fill="none" stroke-linecap="round"/></svg>
<svg style="left:312.7px;top:316px" width="17.3" height="10.8" viewBox="0 0 16 13"><path d="M1.500 7l4.500 4.500L14.500 2" stroke="#128a12" stroke-width="2.800" fill="none" stroke-linecap="round" stroke-linejoin="round"/></svg>
<svg style="left:330px;top:310.9px" width="23.4" height="19.3" viewBox="0 0 20.500 15.700"><path d="M5.300 4.500L1.500 8L5.300 11.500M15.200 4.500L19 8L15.200 11.500M12.300 1L8.200 14.700" stroke="#128a12" stroke-width="2.1" fill="none" stroke-linecap="round" stroke-linejoin="round"/></svg>
<svg style="left:432px;top:310.9px" width="19.7" height="19.7" viewBox="0 0 19 19"><path d="M0.300 18.700l1.300-5.500L12.300 2.500l4.200 4.200L5.800 17.400z" fill="#fff"/><path d="M13.300 1.500l.7-.7a1.700 1.700 0 0 1 2.400 0l1.800 1.800a1.700 1.700 0 0 1 0 2.400l-.7.700z" fill="#fff"/></svg>
<svg style="left:542.8px;top:311px" width="21.5" height="19" viewBox="0 0 21.500 19"><path d="M0.600 1H3.100L6.200 13.700H18.600" stroke="#212529" stroke-width="1.900" fill="none" stroke-linejoin="round" stroke-linecap="round"/><path d="M4.200 1.900H21.200L19.300 11H6.400z" fill="#212529"/><path d="M12.600 0.500V6.800M9.800 4.300L12.600 7.100L15.400 4.300" stroke="#fff" stroke-width="1.700" fill="none"/><circle cx="7" cy="17.100" r="1.900" fill="#212529"/><circle cx="17.400" cy="17.100" r="1.900" fill="#212529"/></svg>
<svg style="left:704.1px;top:311.1px" width="22.3" height="19.4" viewBox="0 0 22 19"><path d="M21 1.200L13.700 7.800" stroke="#212529" stroke-width="2.300" stroke-linecap="round"/><path d="M10.700 6.100L16 11.400" stroke="#212529" stroke-width="2.700" stroke-linecap="round"/><path d="M9.500 8.100L13.700 12.300C14.200 15.500 12 18.700 8.500 18.700H0.200L4.800 14.800L2.700 14.300C3.100 11 5.800 8.300 9.500 8.100Z" fill="#212529"/></svg>
<svg style="left:855.4px;top:261.4px" width="11" height="15.2" viewBox="0 0 11 15"><rect x="0" y="2" width="11" height="13" rx="1.400" fill="#212529"/><rect x="3" y="0" width="5" height="3.800" rx="1" fill="#212529"/><rect x="1.800" y="3.900" width="7.400" height="1.100" fill="#fff"/></svg>
<svg style="left:877.8px;top:261.3px" width="15.1" height="15.1" viewBox="0 0 15.100 15.100"><path d="M6.600 4.800H0.900V14.200H8.500V12.200" stroke="#212529" stroke-width="1.700" fill="none"/><path d="M8.300 0h4l2.800 2.800v7.600a.9.900 0 0 1-.9.900H8.300a.9.900 0 0 1-.9-.9V.9a.9.900 0 0 1 .9-.9z" fill="#212529"/></svg>
<span id="t55" class="a s" style="left:892.9px;top:258px;font-size:19.5px;line-height:22px;color:#212529;">1</span>
<svg style="left:913.1px;top:261.3px" width="15.1" height="15.1" viewBox="0 0 15.100 15.100"><path d="M6.600 4.800H0.900V14.200H8.500V12.200" stroke="#212529" stroke-width="1.700" fill="none"/><path d="M8.300 0h4l2.800 2.800v7.600a.9.900 0 0 1-.9.900H8.300a.9.900 0 0 1-.9-.9V.9a.9.900 0 0 1 .9-.9z" fill="#212529"/></svg>
<span id="t56" class="a s" style="left:928.2px;top:258px;font-size:19.5px;line-height:22px;color:#212529;">2</span>
<svg style="left:950.1px;top:261.3px" width="15.1" height="15.1" viewBox="0 0 15.100 15.100"><path d="M6.600 4.800H0.900V14.200H8.500V12.200" stroke="#212529" stroke-width="1.700" fill="none"/><path d="M8.300 0h4l2.800 2.800v7.600a.9.900 0 0 1-.9.900H8.300a.9.900 0 0 1-.9-.9V.9a.9.900 0 0 1 .9-.9z" fill="#212529"/></svg>
<span id="t57" class="a s" style="left:965.2px;top:258px;font-size:19.5px;line-height:22px;color:#212529;">3</span>
<svg style="left:986.5px;top:261.3px" width="15.1" height="15.1" viewBox="0 0 15.100 15.100"><path d="M6.600 4.800H0.900V14.200H8.500V12.200" stroke="#212529" stroke-width="1.700" fill="none"/><path d="M8.300 0h4l2.800 2.800v7.600a.9.900 0 0 1-.9.900H8.300a.9.900 0 0 1-.9-.9V.9a.9.900 0 0 1 .9-.9z" fill="#212529"/></svg>
<svg style="left:1013.8px;top:261.7px" width="16" height="14.5" viewBox="0 0 17 15"><path d="M2 6.300A6.600 6.600 0 0 1 13.600 3.200" stroke="#212529" stroke-width="2.3" fill="none"/><path d="M15.600 0.300v5h-5z" fill="#212529"/><path d="M15 8.700A6.600 6.600 0 0 1 3.400 11.800" stroke="#212529" stroke-width="2.3" fill="none"/><path d="M1.400 14.700v-5h5z" fill="#212529"/></svg>
<span id="t58" class="a s" style="left:1028.73px;top:258px;font-size:19.5px;line-height:22px;transform:scaleX(1.0407);color:#212529;">X</span>
<svg style="left:854.3px;top:288.4px" width="16" height="15.5" viewBox="0 0 14 15"><path d="M1 1.500h2.500a2 2 0 0 1 3.600 0H9.500a1 1 0 0 1 1 1V4H6.500a1.500 1.500 0 0 0-1.500 1.500V13H1a1 1 0 0 1-1-1V2.500a1 1 0 0 1 1-1z" fill="#212529"/><path d="M7 5.200h4l2.700 2.700v6a1 1 0 0 1-1 1H7a1 1 0 0 1-1-1V6.200a1 1 0 0 1 1-1z" fill="#212529"/></svg>
<span id="t59" class="a s" style="left:870px;top:285px;font-size:19.5px;line-height:22px;color:#212529;">1</span>
<svg style="left:889.3px;top:288.4px" width="16" height="15.5" viewBox="0 0 14 15"><path d="M1 1.500h2.500a2 2 0 0 1 3.600 0H9.500a1 1 0 0 1 1 1V4H6.500a1.500 1.500 0 0 0-1.500 1.500V13H1a1 1 0 0 1-1-1V2.500a1 1 0 0 1 1-1z" fill="#212529"/><path d="M7 5.200h4l2.700 2.700v6a1 1 0 0 1-1 1H7a1 1 0 0 1-1-1V6.200a1 1 0 0 1 1-1z" fill="#212529"/></svg>
<span id="t60" class="a s" style="left:905px;top:285px;font-size:19.5px;line-height:22px;color:#212529;">2</span>
<svg style="left:926.3px;top:288.4px" width="16" height="15.5" viewBox="0 0 14 15"><path d="M1 1.500h2.500a2 2 0 0 1 3.600 0H9.500a1 1 0 0 1 1 1V4H6.500a1.500 1.500 0 0 0-1.500 1.500V13H1a1 1 0 0 1-1-1V2.500a1 1 0 0 1 1-1z" fill="#212529"/><path d="M7 5.200h4l2.700 2.700v6a1 1 0 0 1-1 1H7a1 1 0 0 1-1-1V6.200a1 1 0 0 1 1-1z" fill="#212529"/></svg>
<span id="t61" class="a s" style="left:942px;top:285px;font-size:19.5px;line-height:22px;color:#212529;">3</span>
<svg style="left:970.3px;top:288.4px" width="16" height="15.5" viewBox="0 0 14 15"><path d="M1 1.500h2.500a2 2 0 0 1 3.600 0H9.500a1 1 0 0 1 1 1V4H6.500a1.500 1.500 0 0 0-1.500 1.500V13H1a1 1 0 0 1-1-1V2.500a1 1 0 0 1 1-1z" fill="#212529"/><path d="M7 5.200h4l2.700 2.700v6a1 1 0 0 1-1 1H7a1 1 0 0 1-1-1V6.200a1 1 0 0 1 1-1z" fill="#212529"/></svg>
<span id="t62" class="a s" style="left:986.13px;top:285px;font-size:19.5px;line-height:22px;transform:scaleX(0.9702);color:#212529;">CAT</span>
<svg style="left:1049.5px;top:289.9px" width="12.5" height="13.1" viewBox="0 0 13.500 14"><path d="M1.500 0h9l3 3v9.500a1.500 1.500 0 0 1-1.500 1.500H1.500A1.500 1.500 0 0 1 0 12.500v-11A1.500 1.500 0 0 1 1.500 0z" fill="#212529"/><rect x="2.200" y="1.800" width="7" height="3.200" fill="#fff"/><circle cx="6.800" cy="9.500" r="2.100" fill="#fff"/></svg>
<svg style="left:1074.4px;top:289.7px" width="14.6" height="13.5" viewBox="0 0 17 15"><path d="M2 6.300A6.600 6.600 0 0 1 13.600 3.200" stroke="#212529" stroke-width="2.3" fill="none"/><path d="M15.600 0.300v5h-5z" fill="#212529"/><path d="M15 8.700A6.600 6.600 0 0 1 3.400 11.800" stroke="#212529" stroke-width="2.3" fill="none"/><path d="M1.400 14.700v-5h5z" fill="#212529"/></svg>
<svg style="left:1218px;top:806px" width="10" height="11" viewBox="0 0 10 11"><path d="M2.500 10.800Q8.500 10 9.600 4L10 4V11H2.500z" fill="#8c9297"/><path d="M2 10.300Q7.800 9.400 9 3.500" stroke="#f8f8f6" stroke-width="1" fill="none"/></svg>
<div style="left:0px;top:796.2px;width:46px;height:20.5px;background:#2b2a33;"></div>
<span id="t63" class="a s" style="left:4.2px;top:801px;font-size:12.7px;line-height:14px;transform:scaleX(0.8402);color:#fbfbfe;">192.168.</span>
<div style="left:45px;top:621px;width:1162px;height:373px;background:#ffffff;border:5px solid #ff7f27;overflow:hidden;"></div>
<div style="left:50px;top:626px;width:1146px;height:363px;background:#fafafc;"></div>
<div style="left:50px;top:780px;width:5px;height:38.5px;background:#efeee7;"></div>
<div style="left:1196px;top:626px;width:6px;height:191px;background:#efeee7;"></div>
<div style="left:51px;top:628px;width:1146px;height:152.5px;background:#fff;border:1px solid #e2e4e8;border-radius:5px 0 0 5px;border-right:none;"></div>
<div style="left:63.7px;top:640px;width:1132.3px;height:39.5px;background:#f6f6f6;border-bottom:1px solid #dcdcdc;"></div>
<div style="left:51px;top:818.2px;width:1146px;height:170.8px;background:#fff;border:1px solid #e2e4e8;border-radius:5px 0 0 5px;border-right:none;border-bottom:none;border-radius:5px 0 0 0;"></div>
<div style="left:63.7px;top:830px;width:1132.3px;height:63.5px;background:#f6f6f6;border-bottom:1px solid #dcdcdc;"></div>
<div class="b" style="left:80.4px;top:642px;width:49.3px;height:34.8px;font-size:20px;border-radius:5px;border-color:#6c757d;background:#f8f8f8;"></div>
<div class="b" style="left:152px;top:642px;width:35px;height:34.8px;font-size:20px;border-radius:5px;border-color:#6c757d;background:#f8f8f8;"></div>
<span id="t64" class="a s" style="left:86.18px;top:649px;font-size:18.5px;line-height:21px;transform:scaleX(1.0565);color:#6c757d;-webkit-text-stroke:0.6px #6c757d;">Fold</span>
<svg style="left:157.6px;top:649.4px" width="21.5" height="18.6" viewBox="0 0 22 19"><path d="M21 1.200L13.700 7.800" stroke="#6c757d" stroke-width="2.300" stroke-linecap="round"/><path d="M10.700 6.100L16 11.400" stroke="#6c757d" stroke-width="2.700" stroke-linecap="round"/><path d="M9.500 8.100L13.700 12.300C14.200 15.500 12 18.700 8.500 18.700H0.200L4.800 14.800L2.700 14.300C3.100 11 5.800 8.300 9.500 8.100Z" fill="#6c757d"/></svg>
<span id="t65" class="a s" style="left:201.79px;top:646px;font-size:22px;line-height:25px;transform:scaleX(1.0227);color:#111;-webkit-text-stroke:0.5px #111;">Unit Test TAP results.</span>
<div class="b" style="left:80.2px;top:841.4px;width:49.8px;height:41.3px;font-size:20px;border-radius:5px;border-color:#6c757d;background:#f8f8f8;"></div>
<div class="b" style="left:152px;top:844.3px;width:34.8px;height:35.5px;font-size:20px;border-radius:5px;border-color:#6c757d;background:#f8f8f8;"></div>
<span id="t66" class="a s" style="left:85.88px;top:851px;font-size:18.5px;line-height:21px;transform:scaleX(1.0565);color:#6c757d;-webkit-text-stroke:0.6px #6c757d;">Fold</span>
<svg style="left:157.9px;top:851.9px" width="21.8" height="18.3" viewBox="0 0 22 19"><path d="M21 1.200L13.700 7.800" stroke="#6c757d" stroke-width="2.300" stroke-linecap="round"/><path d="M10.700 6.100L16 11.400" stroke="#6c757d" stroke-width="2.700" stroke-linecap="round"/><path d="M9.500 8.100L13.700 12.300C14.200 15.500 12 18.700 8.500 18.700H0.200L4.800 14.800L2.700 14.300C3.100 11 5.800 8.300 9.500 8.100Z" fill="#6c757d"/></svg>
<span id="t67" class="a s" style="left:203.17px;top:835px;font-size:18.7px;line-height:21px;transform:scaleX(0.9933);color:#111;font-weight:bold;font-style:italic;">Measurement Log</span>
<table style="left:77px;top:698px;width:1088px;"><colgroup><col style="width:27px"><col style="width:188px"><col style="width:126px"><col style="width:118px"><col style="width:62px"><col style="width:117px"><col style="width:89px"><col style="width:262px"><col style="width:98px"></colgroup><tr style="height:21px"><td style="height:21px;padding-top:4px">#</td><td style="height:21px;padding-top:4px">Time</td><td style="height:21px;padding-top:4px">sssnid</td><td style="height:21px;padding-top:4px">Bin message</td><td style="height:21px;padding-top:4px">Param</td><td style="height:21px;padding-top:4px">Got</td><td style="height:21px;padding-top:4px">Operator</td><td style="height:21px;padding-top:4px">Expected / range</td><td style="height:21px;padding-top:4px">PASS/FAIL</td></tr><tr class="g" style="height:21px"><td style="height:21px;padding-top:4px">3</td><td style="height:21px;padding-top:4px">7/19/2024, 11:21:15</td><td style="height:21px;padding-top:4px">SL02x1x1x1_r</td><td style="height:21px;padding-top:4px"></td><td style="height:21px;padding-top:4px">VOUT1</td><td style="height:21px;padding-top:4px">0.400745203</td><td style="height:21px;padding-top:4px">~</td><td style="height:21px;padding-top:4px">0.396000000 : : 0.404000000</td><td style="height:21px;padding-top:4px">PASS</td></tr><tr style="height:20px"><td style="height:20px;padding-top:4px">4</td><td style="height:20px;padding-top:4px">7/19/2024, 11:21:15</td><td style="height:20px;padding-top:4px">SL02x1x1x1_r</td><td style="height:20px;padding-top:4px"></td><td style="height:20px;padding-top:4px">IOUT1</td><td style="height:20px;padding-top:4px">0.172171808</td><td style="height:20px;padding-top:4px">~</td><td style="height:20px;padding-top:4px">0.198000000 : : 0.202000000</td><td style="height:20px;padding-top:4px"><span style="color:#f00;-webkit-text-stroke:0">FAIL</span></td></tr></table>
<table style="left:77px;top:912px;width:825px;"><colgroup><col style="width:45px"><col style="width:189px"><col style="width:62px"><col style="width:63px"><col style="width:82px"><col style="width:89px"><col style="width:62px"><col style="width:89px"><col style="width:90px"><col style="width:53px"></colgroup><tr style="height:21px"><td style="height:21px;padding-top:5px">uti</td><td style="height:21px;padding-top:5px">Time</td><td style="height:21px;padding-top:5px">Param</td><td style="height:21px;padding-top:5px">Label</td><td style="height:21px;padding-top:5px">Channel</td><td style="height:21px;padding-top:5px">Value</td><td style="height:21px;padding-top:5px">Index</td><td style="height:21px;padding-top:5px">Pchannel</td><td style="height:21px;padding-top:5px">Nchannel</td><td style="height:21px;padding-top:5px">Tail</td></tr><tr class="g" style="height:21px"><td style="height:21px;padding-top:5px">28</td><td style="height:21px;padding-top:5px">7/19/2024, 11:21:15</td><td style="height:21px;padding-top:5px">Vout</td><td style="height:21px;padding-top:5px"></td><td style="height:21px;padding-top:5px">1</td><td style="height:21px;padding-top:5px">0.4007</td><td style="height:21px;padding-top:5px"></td><td style="height:21px;padding-top:5px"></td><td style="height:21px;padding-top:5px"></td><td style="height:21px;padding-top:5px">{}</td></tr><tr style="height:21px"><td style="height:21px;padding-top:5px">29</td><td style="height:21px;padding-top:5px">7/19/2024, 11:21:15</td><td style="height:21px;padding-top:5px">Iout</td><td style="height:21px;padding-top:5px"></td><td style="height:21px;padding-top:5px">1</td><td style="height:21px;padding-top:5px">0.172172</td><td style="height:21px;padding-top:5px"></td><td style="height:21px;padding-top:5px"></td><td style="height:21px;padding-top:5px"></td><td style="height:21px;padding-top:5px">{}</td></tr></table>
<div style="left:45px;top:994px;width:10px;height:3px;background:#efeee7;"></div>
<div style="left:55px;top:994px;width:1141px;height:3px;background:#f9f9fc;"></div>
<div style="left:844px;top:373px;width:267.5px;height:294px;background:#fbfbfe;overflow:hidden;"><div style="left:2.2000000000000455px;top:0;width:257.500px;height:320px;background:#fcfcfe;border:1px solid #555;"></div><div style="left:9px;top:25px;width:243px;height:24.600px;background:#a5a6ad;border:1px solid #55565c;border-radius:6px;"></div><span id="t68" class="a s" style="left:17.3px;top:34px;font-size:14.5px;line-height:16px;transform:scaleX(0.8673);color:#0c4a2d;-webkit-text-stroke:0.5px #0c4a2d;">109 ldoSetVoutClamp 0.0 0 0;</span><div style="left:8px;top:61.10px;width:246px;height:12.800px;background:#a5a6ad;border:1px solid #5d5e64;border-left-width:1.500px;border-bottom:1.500px solid #404146;"></div><span id="t69" class="a s" style="left:13.54px;top:61px;font-size:12px;line-height:14px;transform:scaleX(0.9469);color:#0c4a2d;-webkit-text-stroke:0.5px #0c4a2d;">2 beginTask 0.0 0 0;</span><div style="left:8px;top:77.44px;width:246px;height:12.800px;background:#a5a6ad;border:1px solid #5d5e64;border-left-width:1.500px;border-bottom:1.500px solid #404146;"></div><span id="t70" class="a s" style="left:13.54px;top:77px;font-size:12px;line-height:14px;transform:scaleX(0.9501);color:#0c4a2d;-webkit-text-stroke:0.5px #0c4a2d;">3 beginVolatileTask 0.0 0 0;</span><div style="left:8px;top:93.78px;width:246px;height:12.800px;background:#a5a6ad;border:1px solid #5d5e64;border-left-width:1.500px;border-bottom:1.500px solid #404146;"></div><span id="t71" class="a s" style="left:13.54px;top:93px;font-size:12px;line-height:14px;transform:scaleX(0.9413);color:#0c4a2d;-webkit-text-stroke:0.5px #0c4a2d;">4 endTask 0.0 0 0;</span><div style="left:8px;top:110.12px;width:246px;height:12.800px;background:#a5a6ad;border:1px solid #5d5e64;border-left-width:1.500px;border-bottom:1.500px solid #404146;"></div><span id="t72" class="a s" style="left:13.54px;top:110px;font-size:12px;line-height:14px;transform:scaleX(0.9354);color:#0c4a2d;-webkit-text-stroke:0.5px #0c4a2d;">5 executeTask 0.0 0 0;</span><div style="left:8px;top:126.46px;width:246px;height:12.800px;background:#a5a6ad;border:1px solid #5d5e64;border-left-width:1.500px;border-bottom:1.500px solid #404146;"></div><span id="t73" class="a s" style="left:13.54px;top:126px;font-size:12px;line-height:14px;transform:scaleX(0.9387);color:#0c4a2d;-webkit-text-stroke:0.5px #0c4a2d;">6 executeTaskAfterDelay 0.0 0 0;</span><div style="left:8px;top:142.80px;width:246px;height:12.800px;background:#a5a6ad;border:1px solid #5d5e64;border-left-width:1.500px;border-bottom:1.500px solid #404146;"></div><span id="t74" class="a s" style="left:13.54px;top:142px;font-size:12px;line-height:14px;transform:scaleX(0.9475);color:#0c4a2d;-webkit-text-stroke:0.5px #0c4a2d;">7 executeTaskAtTimestamp 0.0 0 0;</span><div style="left:8px;top:159.14px;width:246px;height:12.800px;background:#a5a6ad;border:1px solid #5d5e64;border-left-width:1.500px;border-bottom:1.500px solid #404146;"></div><span id="t75" class="a s" style="left:13.54px;top:159px;font-size:12px;line-height:14px;transform:scaleX(0.9394);color:#0c4a2d;-webkit-text-stroke:0.5px #0c4a2d;">8 getScheduledTaskList 0.0 0 0;</span><div style="left:8px;top:175.48px;width:246px;height:12.800px;background:#a5a6ad;border:1px solid #5d5e64;border-left-width:1.500px;border-bottom:1.500px solid #404146;"></div><span id="t76" class="a s" style="left:13.54px;top:175px;font-size:12px;line-height:14px;transform:scaleX(0.9375);color:#0c4a2d;-webkit-text-stroke:0.5px #0c4a2d;">9 deleteUsrTask 0.0 0 0;</span><div style="left:8px;top:191.82px;width:246px;height:12.800px;background:#a5a6ad;border:1px solid #5d5e64;border-left-width:1.500px;border-bottom:1.500px solid #404146;"></div><span id="t77" class="a s" style="left:13.54px;top:191px;font-size:12px;line-height:14px;transform:scaleX(0.9414);color:#0c4a2d;-webkit-text-stroke:0.5px #0c4a2d;">10 deleteAllUsrTasks 0.0 0 0;</span><div style="left:8px;top:208.16px;width:246px;height:12.800px;background:#a5a6ad;border:1px solid #5d5e64;border-left-width:1.500px;border-bottom:1.500px solid #404146;"></div><span id="t78" class="a s" style="left:13.54px;top:208px;font-size:12px;line-height:14px;transform:scaleX(0.9416);color:#0c4a2d;-webkit-text-stroke:0.5px #0c4a2d;">11 renameUsrTask 0.0 0 0;</span><div style="left:8px;top:224.50px;width:246px;height:12.800px;background:#a5a6ad;border:1px solid #5d5e64;border-left-width:1.500px;border-bottom:1.500px solid #404146;"></div><span id="t79" class="a s" style="left:13.54px;top:224px;font-size:12px;line-height:14px;transform:scaleX(0.9390);color:#0c4a2d;-webkit-text-stroke:0.5px #0c4a2d;">12 getUsrTaskCount 0.0 0 0;</span><div style="left:8px;top:240.84px;width:246px;height:12.800px;background:#a5a6ad;border:1px solid #5d5e64;border-left-width:1.500px;border-bottom:1.500px solid #404146;"></div><span id="t80" class="a s" style="left:13.54px;top:240px;font-size:12px;line-height:14px;transform:scaleX(0.9465);color:#0c4a2d;-webkit-text-stroke:0.5px #0c4a2d;">13 getUsrTaskList 0.0 0 0;</span><div style="left:8px;top:257.18px;width:246px;height:12.800px;background:#a5a6ad;border:1px solid #5d5e64;border-left-width:1.500px;border-bottom:1.500px solid #404146;"></div><span id="t81" class="a s" style="left:13.54px;top:257px;font-size:12px;line-height:14px;transform:scaleX(0.9481);color:#0c4a2d;-webkit-text-stroke:0.5px #0c4a2d;">14 getUsrTaskInfo 0.0 0 0;</span><div style="left:8px;top:273.52px;width:246px;height:12.800px;background:#a5a6ad;border:1px solid #5d5e64;border-left-width:1.500px;border-bottom:1.500px solid #404146;"></div><span id="t82" class="a s" style="left:13.54px;top:273px;font-size:12px;line-height:14px;transform:scaleX(0.9492);color:#0c4a2d;-webkit-text-stroke:0.5px #0c4a2d;">15 getUsrTaskInstInfo 0.0 0 0;</span><div style="left:8px;top:289.86px;width:246px;height:12.800px;background:#a5a6ad;border:1px solid #5d5e64;border-left-width:1.500px;border-bottom:1.500px solid #404146;"></div><span id="t83" class="a s" style="left:13.54px;top:289px;font-size:12px;line-height:14px;transform:scaleX(0.9352);color:#0c4a2d;-webkit-text-stroke:0.5px #0c4a2d;">16 killTask 0.0 0 0;</span></div>
<div style="left:1111px;top:373px;width:1px;height:294px;background:#dfe1e8;"></div>
<div style="left:245.2px;top:375px;width:982px;height:40.6px;background:#2b3035;border-radius:5px;"></div>
<span id="t84" class="a s" style="left:248.12px;top:378px;font-size:16px;line-height:17px;transform:scaleX(0.9781);color:#fff;">ldoSetVout synopsis [inst] : f1 : VOUT Value (V) if f2=0, index of var to use if f2!=0, f2: f1_mode (0: raw, 1: index in global float array), f3 :</span>
<span id="t85" class="a s" style="left:248.12px;top:397px;font-size:16px;line-height:17px;transform:scaleX(0.9839);color:#fff;">Channel (1..2)</span>
<svg style="left:0;top:0" width="1228" height="997" viewBox="0 0 1228 997"><path d="M178.500 327.500L45.700 618.500M45.700 590L45.500 619L69 603.500" stroke="#ff7f27" stroke-width="5" fill="none" stroke-linecap="round" stroke-linejoin="round" shape-rendering="crispEdges"/></svg>
</body></html>
